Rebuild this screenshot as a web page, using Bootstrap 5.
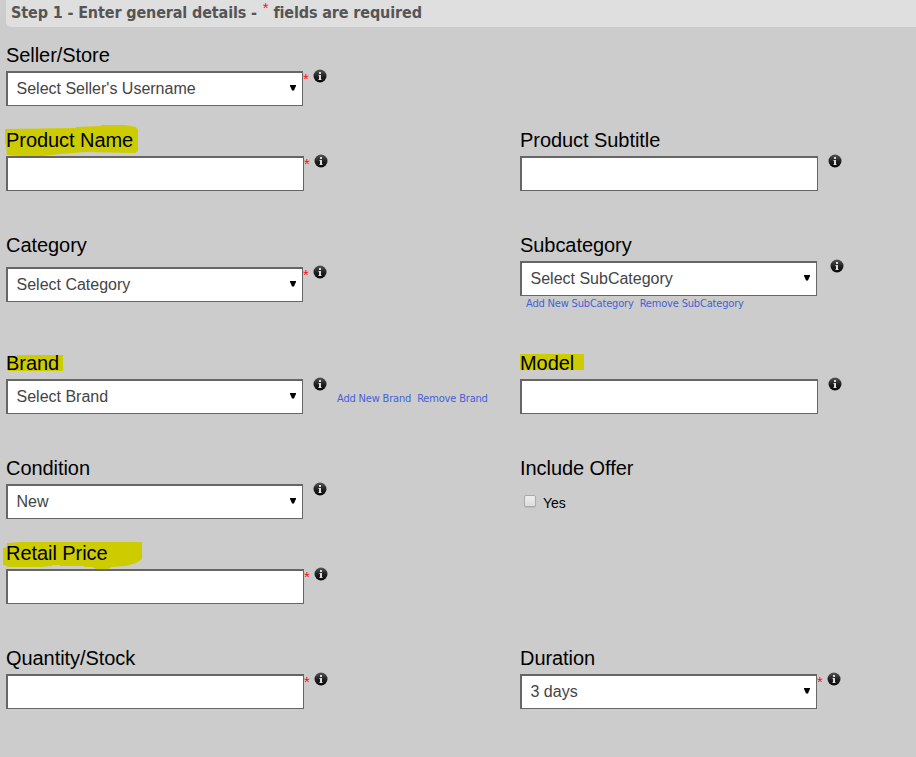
<!DOCTYPE html>
<html lang="en">
<head>
<meta charset="utf-8">
<meta name="viewport" content="width=device-width, initial-scale=1">
<title>Enter general details</title>
<link href="https://cdn.jsdelivr.net/npm/bootstrap@5.3.0/dist/css/bootstrap.min.css" rel="stylesheet">
<style>
body{background:#ccc;font-family:"Liberation Sans",Arial,sans-serif;color:#000;overflow:hidden}
.step-bar{height:27px;margin-left:6px;padding:1px 0 0 5px;background:#dfdfdf;border-bottom-left-radius:5px;color:#555;font:bold 16px/24px "DejaVu Sans Condensed","DejaVu Sans",sans-serif;white-space:pre}
.step-bar h1{font:inherit;letter-spacing:-.13px}
.req{color:#f11;font-family:"Liberation Sans",Arial,sans-serif}
.step-bar .req{font-weight:400;font-size:15px;position:relative;top:-5px;left:1px;margin-right:1px;line-height:1}
.form-area{padding:12px 0 0 6px}
.form-line{display:grid;grid-template-columns:514px 1fr;height:105px}
.line-short{height:85px}
.line-tall{height:118px}
.field-label{font-size:20px;letter-spacing:-.06px;line-height:32px;height:32px;display:block;width:max-content;position:relative;isolation:isolate}
.hl{position:absolute;z-index:-1;left:-6px;top:-4px;overflow:visible}
.box{appearance:none;height:35px;border:solid #666;border-width:2px 1px 1px 2px;border-radius:0;background:#fff;color:#444;font-size:16px;line-height:32px;padding:0 8.5px;outline:0;display:block}
input.box{width:298px}
select.box{width:297px}
.arrow{position:absolute;right:7px;top:14px;pointer-events:none}
.star{width:10px;height:14px;font-size:15px;line-height:14px;padding-top:1px}
.star-wide{width:13px}
.info{margin-top:-2px;display:block}
.links{font:11px/14px "DejaVu Sans Condensed","DejaVu Sans",sans-serif;letter-spacing:-.18px;gap:6px}
.links a{color:#4362d6;text-decoration:none;white-space:nowrap}
.links-below{padding:1px 0 0 6px}
.links-side{padding:13px 0 0 10px}
.offer{padding:10px 0 0 4px;font-size:14px;line-height:18px;gap:7px}
.tick{appearance:none;width:12px;height:12px;border:1px solid #aaa;border-radius:2px;background:linear-gradient(#eee,#ddd);box-shadow:0 1px 1px #bbb;margin:1px 0 0}
.drop{padding-top:6px}
</style>
<script src="https://cdn.jsdelivr.net/npm/bootstrap@5.3.0/dist/js/bootstrap.bundle.min.js"></script>
</head>
<body>
<svg width="0" height="0" class="position-absolute" aria-hidden="true">
<defs>
<linearGradient id="ball" x1="0" y1="0" x2="0" y2="1"><stop offset="0" stop-color="#555"/><stop offset=".5" stop-color="#222"/><stop offset="1" stop-color="#050505"/></linearGradient>
<symbol id="i-info" viewBox="0 0 14 14"><circle cx="7" cy="7" r="6.5" fill="url(#ball)"/><path d="M6 3h2v2H6zM5.5 6H8v4h.5v1h-3v-1H6V7h-.5z" fill="#ddd"/></symbol>
<symbol id="i-down" viewBox="0 0 6 6"><path d="M0 0h6v1L5 3 4 5.5H2L1 3 0 1z" fill="#000"/></symbol>
</defs>
</svg>
<header class="step-bar"><h1 class="m-0">Step 1 - Enter general details - <span class="req">*</span> fields are required</h1></header>
<form class="form-area">
<div class="form-line line-short">
 <div><label class="field-label" for="seller">Seller/Store</label>
  <div class="d-flex align-items-start"><div class="position-relative"><select class="box" id="seller"><option>Select Seller's Username</option></select><svg class="arrow" width="6" height="6"><use href="#i-down"/></svg></div><span class="star req">*</span><svg class="info" width="14" height="14"><use href="#i-info"/></svg></div></div>
</div>
<div class="form-line">
 <div><label class="field-label" for="pname"><svg class="hl" width="142" height="38"><path d="M5 9L76 8V7L101 6V5H125L136 7L138 10V31L135 33L85 32L60 34L43 36H20L7 35L6 25L5 23Z" fill="#cc0"/></svg>Product Name</label>
  <div class="d-flex align-items-start"><input class="box" id="pname"><span class="star req">*</span><svg class="info" width="14" height="14"><use href="#i-info"/></svg></div></div>
 <div><label class="field-label" for="psub">Product Subtitle</label>
  <div class="d-flex align-items-start"><input class="box" id="psub"><span class="star"></span><svg class="info" width="14" height="14"><use href="#i-info"/></svg></div></div>
</div>
<div class="form-line line-tall">
 <div><label class="field-label" for="cat">Category</label>
  <div class="d-flex align-items-start drop"><div class="position-relative"><select class="box" id="cat"><option>Select Category</option></select><svg class="arrow" width="6" height="6"><use href="#i-down"/></svg></div><span class="star req">*</span><svg class="info" width="14" height="14"><use href="#i-info"/></svg></div></div>
 <div><label class="field-label" for="subcat">Subcategory</label>
  <div class="d-flex align-items-start"><div class="position-relative"><select class="box" id="subcat"><option>Select SubCategory</option></select><svg class="arrow" width="6" height="6"><use href="#i-down"/></svg></div><span class="star star-wide"></span><svg class="info" width="14" height="14"><use href="#i-info"/></svg></div>
  <div class="links links-below d-flex"><a href="#">Add New SubCategory</a><a href="#">Remove SubCategory</a></div></div>
</div>
<div class="form-line">
 <div><label class="field-label" for="brand"><svg class="hl" width="70" height="38"><path d="M17 12H63V28H8V20L17 19Z M7 15H20V28H8Z" fill="#cc0"/></svg>Brand</label>
  <div class="d-flex align-items-start"><div class="position-relative"><select class="box" id="brand"><option>Select Brand</option></select><svg class="arrow" width="6" height="6"><use href="#i-down"/></svg></div><span class="star"></span><svg class="info" width="14" height="14"><use href="#i-info"/></svg><div class="links links-side d-flex"><a href="#">Add New Brand</a><a href="#">Remove Brand</a></div></div></div>
 <div><label class="field-label" for="model"><svg class="hl" width="80" height="38"><path d="M6 11H70V27H6Z" fill="#cc0"/></svg>Model</label>
  <div class="d-flex align-items-start"><input class="box" id="model"><span class="star"></span><svg class="info" width="14" height="14"><use href="#i-info"/></svg></div></div>
</div>
<div class="form-line line-short">
 <div><label class="field-label" for="cond">Condition</label>
  <div class="d-flex align-items-start"><div class="position-relative"><select class="box" id="cond"><option>New</option></select><svg class="arrow" width="6" height="6"><use href="#i-down"/></svg></div><span class="star"></span><svg class="info" width="14" height="14"><use href="#i-info"/></svg></div></div>
 <div><span class="field-label">Include Offer</span>
  <label class="offer d-flex"><input class="tick" type="checkbox"><span>Yes</span></label></div>
</div>
<div class="form-line">
 <div><label class="field-label" for="price"><svg class="hl" width="146" height="38"><path d="M7 10L21 9H142V26L136 30L126 33L112 34L108 36H96L92 34H84V33H60V32H52V33L41 34H7V33L3 32V15L7 14Z" fill="#cc0"/></svg>Retail Price</label>
  <div class="d-flex align-items-start"><input class="box" id="price"><span class="star req">*</span><svg class="info" width="14" height="14"><use href="#i-info"/></svg></div></div>
</div>
<div class="form-line">
 <div><label class="field-label" for="qty">Quantity/Stock</label>
  <div class="d-flex align-items-start"><input class="box" id="qty"><span class="star req">*</span><svg class="info" width="14" height="14"><use href="#i-info"/></svg></div></div>
 <div><label class="field-label" for="dur">Duration</label>
  <div class="d-flex align-items-start"><div class="position-relative"><select class="box" id="dur"><option>3 days</option></select><svg class="arrow" width="6" height="6"><use href="#i-down"/></svg></div><span class="star req">*</span><svg class="info" width="14" height="14"><use href="#i-info"/></svg></div></div>
</div>
</form>
</body>
</html>
